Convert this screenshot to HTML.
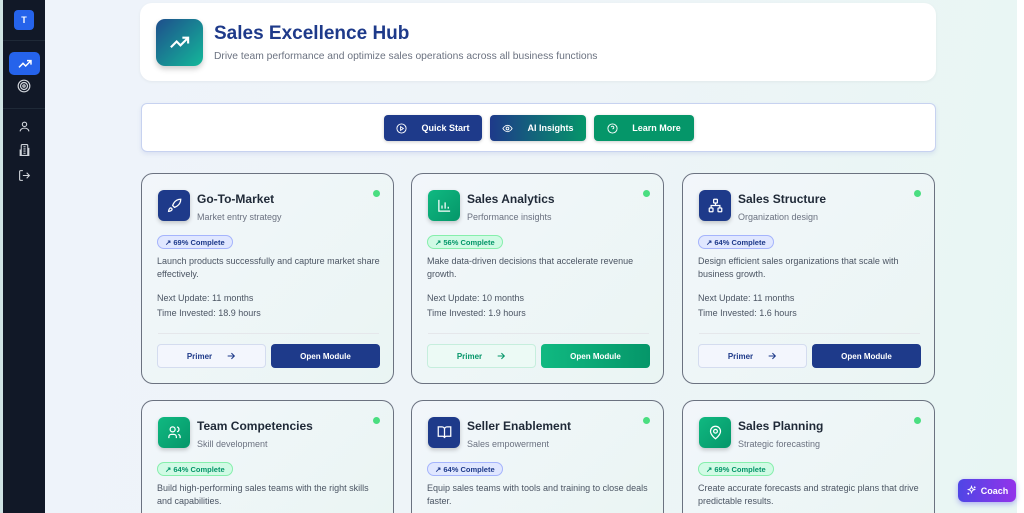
<!DOCTYPE html>
<html style="width:1024px;height:513px;overflow:hidden"><head><meta charset="utf-8"><style>
*{box-sizing:border-box;margin:0;padding:0}
body{width:1024px;height:513px;overflow:hidden;font-family:"Liberation Sans",sans-serif;background:#fff;position:relative}
.side{position:absolute;left:0;top:0;width:45px;height:513px;background:#111827;border-left:3px solid #cfe3e3}
.main{position:absolute;left:45px;top:0;width:972px;height:513px;background:linear-gradient(100deg,#eef3fa 0%,#eef4f8 50%,#e8f6f3 100%)}
.sb{position:absolute;left:14px;width:16px;height:16px}
.hdr{position:absolute;left:140px;top:3px;width:796px;height:78px;background:#fff;border-radius:12px;box-shadow:0 1px 3px rgba(0,0,0,.05)}
.hico{position:absolute;left:16px;top:16px;width:47px;height:47px;border-radius:9px;background:linear-gradient(135deg,#1e4e8c,#14b89a);box-shadow:0 3px 6px rgba(0,0,0,.2)}
.ht{position:absolute;left:74px;top:20px;font-size:19px;font-weight:bold;color:#1e3a8a}
.hs{position:absolute;left:74px;top:48px;font-size:10.3px;color:#6b7280}
.bar{position:absolute;left:141px;top:103px;width:795px;height:49px;background:#fff;border:1px solid #c7d2f0;border-radius:6px;box-shadow:0 2px 4px rgba(100,120,200,.15)}
.btn{position:absolute;top:11px;height:26px;border-radius:4px;color:#fff;font-size:9px;font-weight:bold;display:flex;align-items:center;justify-content:center;gap:14px;box-shadow:0 1px 3px rgba(0,0,0,.2)}
.card{position:absolute;width:253px;height:211px;border:1px solid #6b7280;border-radius:12px;background:linear-gradient(135deg,#f2f6fb,#eaf5f3)}
.card.r2{height:113px;border-bottom:none;border-bottom-left-radius:0;border-bottom-right-radius:0}
.ic{position:absolute;left:16px;top:16px;width:32px;height:31px;border-radius:6px;display:flex;align-items:center;justify-content:center;box-shadow:0 2px 4px rgba(0,0,0,.2)}
.blue{background:#1e3a8a}
.green{background:linear-gradient(135deg,#10b981,#059669)}
.dot{position:absolute;right:13px;top:16px;width:7px;height:7px;border-radius:50%;background:#4ade80}
.t{position:absolute;left:55px;top:18px;font-size:12px;font-weight:bold;color:#1f2937}
.st{position:absolute;left:55px;top:38px;font-size:9px;color:#6b7280}
.bd{position:absolute;left:15px;top:61px;height:14px;padding:0 7px;border-radius:7px;font-size:7.5px;font-weight:bold;display:flex;align-items:center;gap:3px}
.bd.b{background:#e0e7ff;border:1px solid #a5b4fc;color:#1e3a8a}
.bd.g{background:#d1fae5;border:1px solid #86efac;color:#059669}
.d{position:absolute;left:15px;top:81px;width:226px;font-size:9px;line-height:13px;color:#4b5563}
.m{position:absolute;left:15px;font-size:9px;color:#4b5563}
.hr{position:absolute;left:16px;right:14px;top:159px;border-top:1px solid #e5e7eb}
.pr{position:absolute;left:15px;top:170px;width:109px;height:24px;border-radius:4px;font-size:8px;font-weight:bold;display:flex;align-items:center;justify-content:center;gap:14px}
.pr.b{background:#f3f6fd;border:1px solid #d4dcef;color:#1e3a8a}
.pr.g{background:#ecfaf5;border:1px solid #c6eedd;color:#059669}
.op{position:absolute;left:129px;top:170px;width:109px;height:24px;border-radius:4px;font-size:8px;font-weight:bold;color:#fff;display:flex;align-items:center;justify-content:center}
.op.b{background:#1e3a8a}
.op.g{background:linear-gradient(90deg,#10b981,#059669)}
.coach{position:absolute;left:958px;top:479px;width:58px;height:23px;border-radius:6px;background:linear-gradient(90deg,#4f46e5,#9333ea);color:#fff;font-size:9px;font-weight:bold;display:flex;align-items:center;justify-content:center;gap:4px;box-shadow:0 2px 6px rgba(80,70,230,.4)}
</style></head><body>
<div class="side">
 <div style="position:absolute;left:11px;top:10px;width:20px;height:20px;border-radius:4px;background:#2563eb;color:#fff;font-size:9px;font-weight:bold;display:flex;align-items:center;justify-content:center">T</div>
 <div style="position:absolute;left:0;top:40px;width:42px;border-top:1px solid #1f2937"></div>
 <div style="position:absolute;left:6px;top:52px;width:31px;height:23px;border-radius:5px;background:#2563eb"></div>
 <svg class="sb" style="left:14px;top:56px" viewBox="0 0 24 24" fill="none" stroke="#fff" stroke-width="2.2"><path d="M3 17l6-6 4 4 8-8M15 7h6v6"/></svg>
 <svg class="sb" style="left:14px;top:79px;width:14px;height:14px" viewBox="0 0 24 24" fill="none" stroke="#d1d5db" stroke-width="2"><circle cx="12" cy="12" r="10"/><circle cx="12" cy="12" r="6"/><circle cx="12" cy="12" r="2"/></svg>
 <div style="position:absolute;left:0;top:108px;width:42px;border-top:1px solid #1f2937"></div>
 <svg class="sb" style="left:15px;top:120px;width:13px;height:13px" viewBox="0 0 24 24" fill="none" stroke="#d1d5db" stroke-width="2"><circle cx="12" cy="8" r="4"/><path d="M4 21c0-4 4-6 8-6s8 2 8 6"/></svg>
 <svg class="sb" style="left:15px;top:143px;width:13px;height:14px" viewBox="0 0 24 24" fill="none" stroke="#d1d5db" stroke-width="2"><path d="M6 22V4a2 2 0 012-2h8a2 2 0 012 2v18zM6 12H4v10h2M18 9h2v13h-2M10 6h4M10 10h4M10 14h4M10 18h4"/></svg>
 <svg class="sb" style="left:15px;top:169px;width:13px;height:13px" viewBox="0 0 24 24" fill="none" stroke="#d1d5db" stroke-width="2"><path d="M9 21H5a2 2 0 01-2-2V5a2 2 0 012-2h4M16 17l5-5-5-5M21 12H9"/></svg>
</div>
<div class="main"></div>
<div class="hdr">
 <div class="hico"><svg style="position:absolute;left:12px;top:12px" width="23" height="23" viewBox="0 0 24 24" fill="none" stroke="#fff" stroke-width="2.2"><path d="M3 17l6-6 4 4 8-8M15 7h6v6"/></svg></div>
 <div class="ht">Sales Excellence Hub</div>
 <div class="hs">Drive team performance and optimize sales operations across all business functions</div>
</div>
<div class="bar">
 <div class="btn" style="left:242px;width:98px;background:#1e3a8a"><svg width="11" height="11" viewBox="0 0 24 24" fill="none" stroke="#fff" stroke-width="2"><circle cx="12" cy="12" r="10"/><path d="M10 8l6 4-6 4z"/></svg>Quick Start</div>
 <div class="btn" style="left:348px;width:96px;background:linear-gradient(90deg,#1e3a8a,#059669)"><svg width="11" height="11" viewBox="0 0 24 24" fill="none" stroke="#fff" stroke-width="2"><path d="M2 12s4-7 10-7 10 7 10 7-4 7-10 7S2 12 2 12z"/><circle cx="12" cy="12" r="3"/></svg>AI Insights</div>
 <div class="btn" style="left:452px;width:100px;background:#059669"><svg width="11" height="11" viewBox="0 0 24 24" fill="none" stroke="#fff" stroke-width="2"><circle cx="12" cy="12" r="10"/><path d="M9.1 9a3 3 0 015.8 1c0 2-3 3-3 3M12 17h.01"/></svg>Learn More</div>
</div>

<div class="card" style="left:141px;top:173px"><div class="ic blue"><svg width="15" height="15" viewBox="0 0 24 24" fill="none" stroke="#fff" stroke-width="2"><path d="M4.5 16.5c-1.5 1.3-2 5-2 5s3.7-.5 5-2c.7-.8.7-2.1-.1-2.9a2.2 2.2 0 00-2.9-.1zM12 15l-3-3a22 22 0 012-4A13 13 0 0122 2c0 2.7-.8 7.5-6 11a22 22 0 01-4 2z"/></svg></div><div class="dot"></div><div class="t">Go-To-Market</div><div class="st">Market entry strategy</div><div class="bd b">↗ 69% Complete</div><div class="d">Launch products successfully and capture market share effectively.</div><div class="m" style="top:119px">Next Update: 11 months</div><div class="m" style="top:134px">Time Invested: 18.9 hours</div><div class="hr"></div><div class="pr b">Primer <svg width="10" height="10" viewBox="0 0 24 24" fill="none" stroke="currentColor" stroke-width="2.5"><path d="M4 12h16M13 5l7 7-7 7"/></svg></div><div class="op b">Open Module</div></div>
<div class="card" style="left:411px;top:173px"><div class="ic green"><svg width="15" height="15" viewBox="0 0 24 24" fill="none" stroke="#fff" stroke-width="2"><path d="M3 3v18h18M8 17v-5M13 17V7M18 17v-3"/></svg></div><div class="dot"></div><div class="t">Sales Analytics</div><div class="st">Performance insights</div><div class="bd g">↗ 56% Complete</div><div class="d">Make data-driven decisions that accelerate revenue growth.</div><div class="m" style="top:119px">Next Update: 10 months</div><div class="m" style="top:134px">Time Invested: 1.9 hours</div><div class="hr"></div><div class="pr g">Primer <svg width="10" height="10" viewBox="0 0 24 24" fill="none" stroke="currentColor" stroke-width="2.5"><path d="M4 12h16M13 5l7 7-7 7"/></svg></div><div class="op g">Open Module</div></div>
<div class="card" style="left:682px;top:173px"><div class="ic blue"><svg width="15" height="15" viewBox="0 0 24 24" fill="none" stroke="#fff" stroke-width="2"><rect x="9" y="2" width="6" height="6" rx="1"/><rect x="2" y="16" width="6" height="6" rx="1"/><rect x="16" y="16" width="6" height="6" rx="1"/><path d="M5 16v-4h14v4M12 8v4"/></svg></div><div class="dot"></div><div class="t">Sales Structure</div><div class="st">Organization design</div><div class="bd b">↗ 64% Complete</div><div class="d">Design efficient sales organizations that scale with business growth.</div><div class="m" style="top:119px">Next Update: 11 months</div><div class="m" style="top:134px">Time Invested: 1.6 hours</div><div class="hr"></div><div class="pr b">Primer <svg width="10" height="10" viewBox="0 0 24 24" fill="none" stroke="currentColor" stroke-width="2.5"><path d="M4 12h16M13 5l7 7-7 7"/></svg></div><div class="op b">Open Module</div></div>

<div class="card r2" style="left:141px;top:400px"><div class="ic green"><svg width="15" height="15" viewBox="0 0 24 24" fill="none" stroke="#fff" stroke-width="2"><circle cx="9" cy="7" r="4"/><path d="M3 21v-2a4 4 0 014-4h4a4 4 0 014 4v2M16 3.1a4 4 0 010 7.8M21 21v-2a4 4 0 00-3-3.9"/></svg></div><div class="dot"></div><div class="t">Team Competencies</div><div class="st">Skill development</div><div class="bd g">↗ 64% Complete</div><div class="d">Build high-performing sales teams with the right skills and capabilities.</div></div>
<div class="card r2" style="left:411px;top:400px"><div class="ic blue"><svg width="15" height="15" viewBox="0 0 24 24" fill="none" stroke="#fff" stroke-width="2"><path d="M2 3h6a4 4 0 014 4v14a3 3 0 00-3-3H2zM22 3h-6a4 4 0 00-4 4v14a3 3 0 013-3h7z"/></svg></div><div class="dot"></div><div class="t">Seller Enablement</div><div class="st">Sales empowerment</div><div class="bd b">↗ 64% Complete</div><div class="d">Equip sales teams with tools and training to close deals faster.</div></div>
<div class="card r2" style="left:682px;top:400px"><div class="ic green"><svg width="15" height="15" viewBox="0 0 24 24" fill="none" stroke="#fff" stroke-width="2"><path d="M20 10c0 6-8 12-8 12s-8-6-8-12a8 8 0 0116 0z"/><circle cx="12" cy="10" r="3"/></svg></div><div class="dot"></div><div class="t">Sales Planning</div><div class="st">Strategic forecasting</div><div class="bd g">↗ 69% Complete</div><div class="d">Create accurate forecasts and strategic plans that drive predictable results.</div></div>

<div class="coach"><svg width="11" height="11" viewBox="0 0 24 24" fill="none" stroke="#fff" stroke-width="2"><path d="M12 3l1.9 5.1L19 10l-5.1 1.9L12 17l-1.9-5.1L5 10l5.1-1.9zM19 3v4M21 5h-4M5 17v4M7 19H3"/></svg>Coach</div>
</body></html>
